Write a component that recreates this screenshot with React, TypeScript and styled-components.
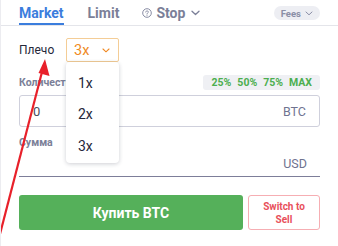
import React from 'react';
import styled, { createGlobalStyle } from 'styled-components';

const GlobalStyle = createGlobalStyle`
    html, body {
        margin: 0;
        padding: 0;
        background: #ffffff;
        font-family: Roboto, "Liberation Sans", sans-serif;
    }
`;

const Panel = styled.div`
    position: relative;
    width: 338px;
    height: 246px;
    box-sizing: border-box;
    border-left: 1px solid #ececf0;
    overflow: hidden;
`;

const Tabs = styled.div`
    display: flex;
    align-items: center;
    height: 25px;
    padding: 0 18px 0 18px;
    border-bottom: 1px solid #e4e5ea;
`;

const Tab = styled.div<{ $active?: boolean }>`
    display: flex;
    align-items: center;
    height: 100%;
    box-sizing: border-box;
    margin-right: 24px;
    font-size: 14px;
    font-weight: 700;
    color: ${(p) => (p.$active ? '#3b7ddd' : '#7b7f98')};
    border-bottom: 2px solid ${(p) => (p.$active ? '#3b7ddd' : 'transparent')};
    padding-top: 2px;
`;

const HelpIcon = styled.svg`
    margin-right: 4px;
    margin-left: -1px;
`;

const Chevron = styled.svg`
    margin-left: 6px;
`;

const FeesPill = styled.div`
    margin-left: auto;
    display: flex;
    align-items: center;
    height: 14px;
    padding: 0 7px 0 7px;
    border-radius: 7px;
    background: #edeef3;
    font-size: 9.5px;
    font-weight: 700;
    color: #8a8ea6;
    margin-top: 1px;
`;

const Body = styled.div`
    padding: 12px 18px 0 18px;
`;

const LeverRow = styled.div`
    display: flex;
    align-items: center;
    height: 24px;
`;

const LeverLabel = styled.span`
    font-size: 12px;
    color: #26283a;
    width: 47px;
`;

const SelectWrap = styled.div`
    position: relative;
`;

const SelectBox = styled.div`
    display: flex;
    align-items: center;
    justify-content: space-between;
    width: 53px;
    height: 24px;
    box-sizing: border-box;
    padding: 0 8px 0 7px;
    border: 1px solid #f4cd96;
    border-radius: 2px;
    font-size: 14.5px;
    color: #f08a24;
`;

const Menu = styled.div`
    position: absolute;
    top: 24px;
    left: 0;
    width: 53px;
    height: 101px;
    box-sizing: border-box;
    padding-top: 5px;
    background: #ffffff;
    border-radius: 4px;
    box-shadow: 0 1px 4px rgba(30, 35, 60, 0.22);
    z-index: 2;
`;

const MenuItem = styled.div`
    height: 31.5px;
    display: flex;
    align-items: center;
    padding-left: 12px;
    font-size: 14px;
    color: #26283a;
`;

const LabelRow = styled.div`
    display: flex;
    align-items: center;
    justify-content: space-between;
    margin-top: 12px;
    height: 16px;
`;

const FieldLabel = styled.span`
    font-size: 10.5px;
    font-weight: 700;
    color: #7b7f98;
`;

const PercentPill = styled.div`
    display: flex;
    gap: 6px;
    align-items: center;
    height: 15px;
    padding: 0 8px 0 9px;
    border-radius: 3px;
    background: #eff0f4;
    font-size: 10.5px;
    font-weight: 700;
    color: #4cae4f;
`;

const InputBox = styled.div`
    display: flex;
    align-items: center;
    justify-content: space-between;
    margin-top: 5px;
    height: 32px;
    box-sizing: border-box;
    padding: 0 13px 0 13px;
    border: 1px solid #cfd0dc;
    border-radius: 3px;
`;

const InputValue = styled.span`
    color: #4a4c5c;
    font-size: 13px;
`;

const Unit = styled.span`
    color: #6f7390;
    font-size: 12.5px;
`;

const SumLabel = styled(FieldLabel)`
    display: block;
    margin-top: 9px;
`;

const LineField = styled.div`
    display: flex;
    justify-content: flex-end;
    align-items: center;
    height: 26px;
    padding-right: 13px;
    border-bottom: 1px solid #7d7e99;
    margin-top: 1px;
`;

const Actions = styled.div`
    display: flex;
    gap: 5px;
    margin-top: 18px;
`;

const BuyButton = styled.div`
    flex: 1;
    display: flex;
    align-items: center;
    justify-content: center;
    height: 35px;
    border-radius: 3px;
    background: #55b05a;
    color: #ffffff;
    font-size: 14px;
    font-weight: 700;
`;

const SwitchButton = styled.div`
    width: 72px;
    height: 35px;
    box-sizing: border-box;
    display: flex;
    align-items: center;
    justify-content: center;
    text-align: center;
    border: 1.5px solid #f6aeb3;
    border-radius: 3px;
    color: #e8505b;
    font-size: 10px;
    font-weight: 700;
    line-height: 13px;
`;

const Arrow = styled.svg`
    position: absolute;
    left: 0;
    top: 0;
    pointer-events: none;
    z-index: 5;
`;

const App: React.FC = () => {
    return (
        <Panel>
            <GlobalStyle />
            <Tabs>
                <Tab $active>Market</Tab>
                <Tab>Limit</Tab>
                <Tab>
                    <HelpIcon width="10" height="10" viewBox="0 0 10 10">
                        <circle cx="5" cy="5" r="4.3" fill="none" stroke="#7b7f98" strokeWidth="0.9" />
                        <path d="M3.6 4 C3.6 2.6 6.4 2.6 6.4 4 C6.4 4.9 5 4.9 5 6" fill="none" stroke="#7b7f98" strokeWidth="0.9" strokeLinecap="round" />
                        <circle cx="5" cy="7.3" r="0.5" fill="#7b7f98" />
                    </HelpIcon>
                    Stop
                    <Chevron width="9" height="6" viewBox="0 0 9 6">
                        <path d="M1 1.2 L4.5 4.5 L8 1.2" fill="none" stroke="#7b7f98" strokeWidth="1.3" strokeLinecap="round" strokeLinejoin="round" />
                    </Chevron>
                </Tab>
                <FeesPill>
                    Fees
                    <svg width="8" height="5" viewBox="0 0 8 5" style={{ marginLeft: 4 }}>
                        <path d="M1 1 L4 3.8 L7 1" fill="none" stroke="#8a8ea6" strokeWidth="1" strokeLinecap="round" />
                    </svg>
                </FeesPill>
            </Tabs>
            <Body>
                <LeverRow>
                    <LeverLabel>Плечо</LeverLabel>
                    <SelectWrap>
                        <SelectBox>
                            3x
                            <svg width="8" height="5" viewBox="0 0 8 5">
                                <path d="M1 1 L4 3.8 L7 1" fill="none" stroke="#f08a24" strokeWidth="1.1" strokeLinecap="round" />
                            </svg>
                        </SelectBox>
                        <Menu>
                            <MenuItem>1x</MenuItem>
                            <MenuItem>2x</MenuItem>
                            <MenuItem>3x</MenuItem>
                        </Menu>
                    </SelectWrap>
                </LeverRow>
                <LabelRow>
                    <FieldLabel>Количество</FieldLabel>
                    <PercentPill>
                        <span>25%</span>
                        <span>50%</span>
                        <span>75%</span>
                        <span>MAX</span>
                    </PercentPill>
                </LabelRow>
                <InputBox>
                    <InputValue>0</InputValue>
                    <Unit>BTC</Unit>
                </InputBox>
                <SumLabel>Сумма</SumLabel>
                <LineField>
                    <Unit>USD</Unit>
                </LineField>
                <Actions>
                    <BuyButton>Купить BTC</BuyButton>
                    <SwitchButton>
                        Switch to
                        <br />
                        Sell
                    </SwitchButton>
                </Actions>
            </Body>
            <Arrow width="338" height="246" viewBox="0 0 338 246">
                <line x1="-1" y1="234" x2="41" y2="72" stroke="#e8202a" strokeWidth="2.2" />
                <polygon points="44,59 48.5,76 37.5,73" fill="#e8202a" />
            </Arrow>
        </Panel>
    );
};

export default App;
